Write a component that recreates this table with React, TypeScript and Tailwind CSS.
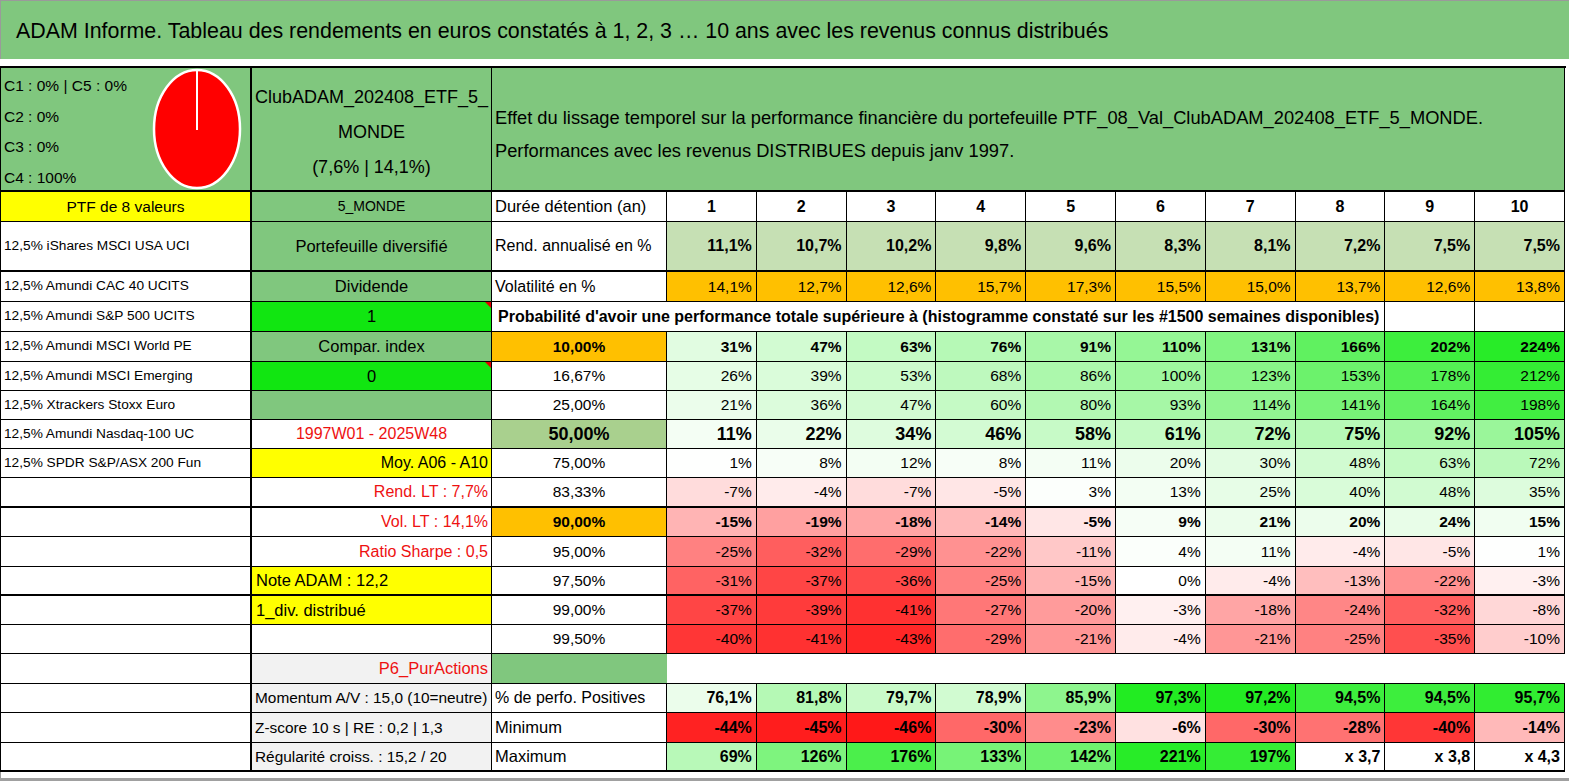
import type { CSSProperties, ReactNode } from 'react';

const FONT = "font-[family-name:'Liberation_Sans',Arial,sans-serif]";

interface CellProps {
  className?: string;
  children?: ReactNode;
  style?: CSSProperties;
}

// every cell carries its own borders (right + bottom)
function Cell({ className = '', children, style }: CellProps) {
  return (
    <div className={`relative flex items-center overflow-hidden whitespace-nowrap border-black ${className}`} style={style}>
      {children}
    </div>
  );
}

function mix(t: number, r: number, g: number, b: number) {
  const k = Math.max(0, Math.min(1, t));
  return `rgb(${Math.round(255 - k * (255 - r))}, ${Math.round(255 - k * (255 - g))}, ${Math.round(255 - k * (255 - b))})`;
}

function heat(v: number, max = 224, minNeg = 46): CSSProperties {
  if (v >= 0) return { backgroundColor: mix(v / max, 40, 236, 40) };
  return { backgroundColor: mix(-v / minNeg, 255, 24, 24) };
}

const holdings = [
  '12,5% iShares MSCI USA UCI',
  '12,5% Amundi CAC 40 UCITS',
  '12,5% Amundi S&P 500 UCITS',
];

const rendement = ['11,1%', '10,7%', '10,2%', '9,8%', '9,6%', '8,3%', '8,1%', '7,2%', '7,5%', '7,5%'];
const volatilite = ['14,1%', '12,7%', '12,6%', '15,7%', '17,3%', '15,5%', '15,0%', '13,7%', '12,6%', '13,8%'];

interface ProbRow {
  seuil: string;
  seuilCls: string;
  vals: number[];
  bold?: boolean;
  big?: boolean;
  thick?: boolean;
}

const probRows: ProbRow[] = [
  { seuil: '10,00%', seuilCls: 'bg-[#ffc000] font-bold', vals: [31, 47, 63, 76, 91, 110, 131, 166, 202, 224], bold: true },
  { seuil: '16,67%', seuilCls: 'bg-white', vals: [26, 39, 53, 68, 86, 100, 123, 153, 178, 212] },
  { seuil: '25,00%', seuilCls: 'bg-white', vals: [21, 36, 47, 60, 80, 93, 114, 141, 164, 198] },
  { seuil: '50,00%', seuilCls: 'bg-[#a9d08e] font-bold text-[18px]', vals: [11, 22, 34, 46, 58, 61, 72, 75, 92, 105], bold: true, big: true },
  { seuil: '75,00%', seuilCls: 'bg-white', vals: [1, 8, 12, 8, 11, 20, 30, 48, 63, 72] },
  { seuil: '83,33%', seuilCls: 'bg-white', vals: [-7, -4, -7, -5, 3, 13, 25, 40, 48, 35], thick: true },
  { seuil: '90,00%', seuilCls: 'bg-[#ffc000] font-bold', vals: [-15, -19, -18, -14, -5, 9, 21, 20, 24, 15], bold: true },
  { seuil: '95,00%', seuilCls: 'bg-white', vals: [-25, -32, -29, -22, -11, 4, 11, -4, -5, 1] },
  { seuil: '97,50%', seuilCls: 'bg-white', vals: [-31, -37, -36, -25, -15, 0, -4, -13, -22, -3], thick: true },
  { seuil: '99,00%', seuilCls: 'bg-white', vals: [-37, -39, -41, -27, -20, -3, -18, -24, -32, -8] },
  { seuil: '99,50%', seuilCls: 'bg-white', vals: [-40, -41, -43, -29, -21, -4, -21, -25, -35, -10] },
];

// column A for rows 5..15 (same index as probRows)
const leftA = ['12,5% Amundi MSCI World PE', '12,5% Amundi MSCI Emerging', '12,5% Xtrackers Stoxx Euro', '12,5% Amundi Nasdaq-100 UC', '12,5% SPDR S&P/ASX 200 Fun', '', '', '', '', '', ''];

function ColB({ i, thick }: { i: number; thick?: boolean }) {
  const bb = thick ? 'border-b-2' : 'border-b';
  switch (i) {
    case 0:
      return <Cell className={`border-r ${bb} justify-center bg-[#80c77e] text-[16.5px]`}>Compar. index</Cell>;
    case 1:
      return (
        <Cell className={`border-r ${bb} justify-center bg-[#11e611] text-[16.5px]`}>
          0
          <span className="absolute right-0 top-0 h-0 w-0 border-l-[6px] border-t-[6px] border-l-transparent border-t-[#e00000]" />
        </Cell>
      );
    case 2:
      return <Cell className={`border-r ${bb} bg-[#80c77e]`} />;
    case 3:
      return <Cell className={`border-r ${bb} justify-center text-[#ee1111] text-[16px]`}>1997W01 - 2025W48</Cell>;
    case 4:
      return <Cell className={`border-r ${bb} justify-end pr-[3px] bg-[#ffff00] text-[16px]`}>Moy. A06 - A10</Cell>;
    case 5:
      return <Cell className={`border-r ${bb} justify-end pr-[3px] text-[#ee1111] text-[16px]`}>Rend. LT : 7,7%</Cell>;
    case 6:
      return <Cell className={`border-r ${bb} justify-end pr-[3px] text-[#ee1111] text-[16px]`}>Vol. LT : 14,1%</Cell>;
    case 7:
      return <Cell className={`border-r ${bb} justify-end pr-[3px] text-[#ee1111] text-[16px]`}>Ratio Sharpe : 0,5</Cell>;
    case 8:
      return <Cell className={`border-r ${bb} pl-[4px] bg-[#ffff00] text-[16.5px]`}>Note ADAM : 12,2</Cell>;
    case 9:
      return <Cell className={`border-r ${bb} pl-[4px] bg-[#ffff00] text-[16.5px]`}>1_div. distribué</Cell>;
    default:
      return <Cell className={`border-r ${bb}`} />;
  }
}

const positives = [76.1, 81.8, 79.7, 78.9, 85.9, 97.3, 97.2, 94.5, 94.5, 95.7];
const minimum = [-44, -45, -46, -30, -23, -6, -30, -28, -40, -14];
const maximum: (number | string)[] = [69, 126, 176, 133, 142, 221, 197, 'x 3,7', 'x 3,8', 'x 4,3'];

function pct(v: number) {
  return v.toFixed(1).replace('.', ',') + '%';
}

export default function App() {
  return (
    <div className={`${FONT} h-[782px] w-[1569px] overflow-hidden bg-white text-[15.5px] text-black`}>
      <div className="flex h-[59px] items-center border-l border-t border-[#9a9a9a] bg-[#80c77e] pl-[15px] pt-[2px] text-[21.4px]">
        ADAM Informe. Tableau des rendements en euros constatés à 1, 2, 3 … 10 ans avec les revenus connus distribués
      </div>
      <div className="h-[7px]" />

      <div className="grid w-[1566px] grid-cols-[251px_240px_175px_repeat(10,89.8px)] grid-rows-[124px_30px_50px_30px_30px_30px_29px_29px_29px_29px_30px_29px_30px_29px_29px_29px_30px_29px_30px_29px] border-l border-t-2 border-black">
        {/* row 0 */}
        <Cell className="border-b-2 border-r-2 bg-[#80c77e] items-start">
          <div className="w-[151px] pl-[3px] pt-[3px] text-[15.5px] leading-[30.7px]">
            <div>C1 : 0% | C5 : 0%</div>
            <div>C2 : 0%</div>
            <div>C3 : 0%</div>
            <div>C4 : 100%</div>
          </div>
          <svg width="92" height="122" viewBox="0 0 92 122" className="self-center">
            <ellipse cx="45" cy="61" rx="43" ry="59" fill="#ff0000" stroke="#ffffff" strokeWidth="2.5" />
            <line x1="45" y1="3" x2="45" y2="62" stroke="#ffffff" strokeWidth="2" />
          </svg>
        </Cell>
        <Cell className="border-b-2 border-r bg-[#80c77e] flex-col justify-center pt-[6px] text-center text-[18px] leading-[35px]">
          <div>ClubADAM_202408_ETF_5_</div>
          <div>MONDE</div>
          <div>(7,6% | 14,1%)</div>
        </Cell>
        <Cell className="col-span-11 border-b-2 border-r bg-[#80c77e] flex-col items-start justify-center pl-[3px] pt-[9px] text-[18.3px] leading-[33px]">
          <div>Effet du lissage temporel sur la performance financière du portefeuille PTF_08_Val_ClubADAM_202408_ETF_5_MONDE.</div>
          <div>Performances avec les revenus DISTRIBUES depuis janv 1997.</div>
        </Cell>

        {/* row 1 */}
        <Cell className="border-b border-r-2 justify-center bg-[#ffff00]">PTF de 8 valeurs</Cell>
        <Cell className="border-b border-r justify-center bg-[#80c77e] text-[14px]">5_MONDE</Cell>
        <Cell className="border-b border-r pl-[3px] text-[16.5px]">Durée détention (an)</Cell>
        {Array.from({ length: 10 }, (_, i) => (
          <Cell key={i} className="border-b border-r justify-center font-bold text-[16px]">
            {i + 1}
          </Cell>
        ))}

        {/* row 2 */}
        <Cell className="border-b-2 border-r-2 pl-[3px] text-[13.7px]">{holdings[0]}</Cell>
        <Cell className="border-b-2 border-r justify-center bg-[#80c77e] text-[16.5px]">Portefeuille diversifié</Cell>
        <Cell className="border-b-2 border-r pl-[3px] text-[16px]">Rend. annualisé en %</Cell>
        {rendement.map((v, i) => (
          <Cell key={i} className="border-b-2 border-r justify-end pr-[4px] bg-[#c6e0b4] font-bold text-[16px]">
            {v}
          </Cell>
        ))}

        {/* row 3 */}
        <Cell className="border-b border-r-2 pl-[3px] text-[13.7px]">{holdings[1]}</Cell>
        <Cell className="border-b border-r justify-center bg-[#80c77e] text-[16.5px]">Dividende</Cell>
        <Cell className="border-b border-r pl-[3px] text-[16px]">Volatilité en %</Cell>
        {volatilite.map((v, i) => (
          <Cell key={i} className="border-b border-r justify-end pr-[4px] bg-[#ffc000]">
            {v}
          </Cell>
        ))}

        {/* row 4 */}
        <Cell className="border-b border-r-2 pl-[3px] text-[13.7px]">{holdings[2]}</Cell>
        <Cell className="border-b border-r justify-center bg-[#11e611] text-[16.5px]">
          1
          <span className="absolute right-0 top-0 h-0 w-0 border-l-[6px] border-t-[6px] border-l-transparent border-t-[#e00000]" />
        </Cell>
        <Cell className="col-span-9 border-b border-r pl-[6px] font-bold text-[16px]">
          Probabilité d'avoir une performance totale supérieure à (histogramme constaté sur les #1500 semaines disponibles)
        </Cell>
        <Cell className="border-b border-r" />
        <Cell className="border-b border-r" />

        {/* rows 5-15 */}
        {probRows.map((row, r) => {
          const bb = row.thick ? 'border-b-2' : 'border-b';
          return [
            <Cell key={`a${r}`} className={`${bb} border-r-2 pl-[3px] text-[13.7px]`}>
              {leftA[r]}
            </Cell>,
            <ColB key={`b${r}`} i={r} thick={row.thick} />,
            <Cell key={`c${r}`} className={`${bb} border-r justify-center ${row.seuilCls}`}>
              {row.seuil}
            </Cell>,
            ...row.vals.map((v, i) => (
              <Cell
                key={`v${r}-${i}`}
                className={`${bb} border-r justify-end pr-[4px] ${row.bold ? 'font-bold' : ''} ${row.big ? 'text-[18px]' : ''}`}
                style={heat(v)}
              >
                {v}%
              </Cell>
            )),
          ];
        })}

        {/* row 16 */}
        <Cell className="border-b border-r-2" />
        <Cell className="border-b border-r justify-end pr-[3px] bg-[#f2f2f2] text-[#ee1111] text-[16.5px]">P6_PurActions</Cell>
        <Cell className="border-b bg-[#80c77e]" />
        <Cell className="col-span-10 border-b" />

        {/* row 17 */}
        <Cell className="border-b border-r-2" />
        <Cell className="border-b border-r pl-[3px] bg-[#f2f2f2] text-[15.4px]">Momentum A/V : 15,0 (10=neutre)</Cell>
        <Cell className="border-b border-r pl-[3px] text-[16px]">% de perfo. Positives</Cell>
        {positives.map((v, i) => (
          <Cell key={i} className="border-b border-r justify-end pr-[4px] font-bold text-[16px]" style={{ backgroundColor: mix((v - 74) / 23.3, 34, 236, 34) }}>
            {pct(v)}
          </Cell>
        ))}

        {/* row 18 */}
        <Cell className="border-b border-r-2" />
        <Cell className="border-b border-r pl-[3px] bg-[#f2f2f2] text-[15.4px]">Z-score 10 s | RE : 0,2 | 1,3</Cell>
        <Cell className="border-b border-r pl-[3px] text-[16.5px]">Minimum</Cell>
        {minimum.map((v, i) => (
          <Cell key={i} className="border-b border-r justify-end pr-[4px] font-bold text-[16px]" style={heat(v)}>
            {v}%
          </Cell>
        ))}

        {/* row 19 */}
        <Cell className="border-b-2 border-r-2" />
        <Cell className="border-b-2 border-r pl-[3px] bg-[#f2f2f2] text-[15.4px]">Régularité croiss. : 15,2 / 20</Cell>
        <Cell className="border-b-2 border-r pl-[3px] text-[16.5px]">Maximum</Cell>
        {maximum.map((v, i) => (
          <Cell
            key={i}
            className="border-b-2 border-r justify-end pr-[4px] font-bold text-[16px]"
            style={typeof v === 'number' ? heat(v, 210) : undefined}
          >
            {typeof v === 'number' ? `${v}%` : v}
          </Cell>
        ))}
      </div>

      <div className="h-[6px] border-l border-[#9a9a9a]" />
      <div className="h-[3px] bg-[#a0a0a0]" />
    </div>
  );
}
